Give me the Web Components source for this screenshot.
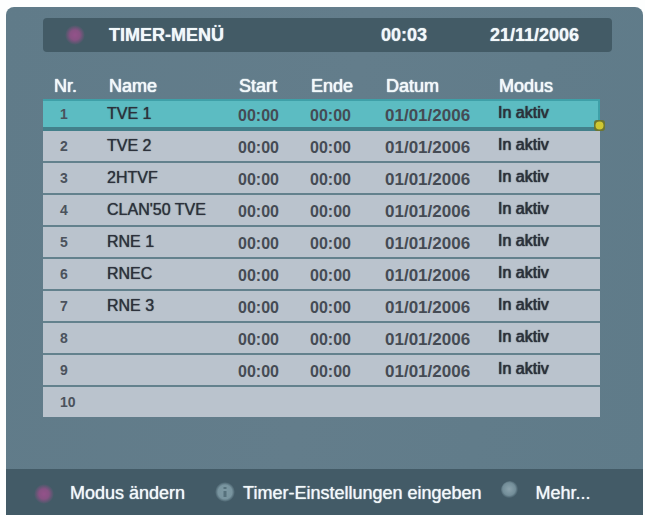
<!DOCTYPE html>
<html lang="de">
<head>
<meta charset="utf-8">
<meta name="viewport" content="width=device-width, initial-scale=1">
<title>Timer-Menü</title>
<style>
    html {
        background: #fdfefe;
    }
    body {
        margin: 0;
        padding: 7px 2px 0 6px;
        box-sizing: border-box;
        min-height: 100vh;
        display: flex;
        font-family: "Liberation Sans", Arial, sans-serif;
    }
</style>
</head>
<body>
<osd-screen>
    <osd-title-bar slot="title">
        TIMER-MENÜ
        <time slot="clock">00:03</time>
        <time slot="date" datetime="2006-11-21">21/11/2006</time>
    </osd-title-bar>
    <timer-table names="TVE 1,TVE 2,2HTVF,CLAN'50 TVE,RNE 1,RNEC,RNE 3,," rows="10" selected="1"></timer-table>
    <osd-key slot="keys" kind="red">Modus ändern</osd-key>
    <osd-key slot="keys" kind="info">Timer-Einstellungen eingeben</osd-key>
    <osd-key slot="keys" kind="more">Mehr...</osd-key>
</osd-screen>

<script>
class OsdScreen extends HTMLElement {
    connectedCallback() {
        const shadow = this.attachShadow({ mode: "open" });
        shadow.innerHTML = `
            <style>
                :host {
                    flex: 1;
                    min-width: 0;
                    display: flex;
                    flex-direction: column;
                    overflow: hidden;
                    background: linear-gradient(100deg, #607b89, #637d8b 50%, #5f7b89);
                    border-radius: 8px 8px 0 0;
                    color: #f2f8fa;
                }
                header {
                    padding: 11px 31px 0 37px;
                }
                main {
                    flex: 1;
                    padding: 22px 43px 50px 37px;
                }
                footer {
                    display: flex;
                    align-items: center;
                    box-sizing: border-box;
                    min-height: 46px;
                    padding: 2px 28px 0;
                    gap: 18px;
                    background: #435b67;
                }
            </style>
            <header><slot name="title"></slot></header>
            <main><slot></slot></main>
            <footer><slot name="keys"></slot></footer>
        `;
    }
}

class OsdTitleBar extends HTMLElement {
    connectedCallback() {
        const shadow = this.attachShadow({ mode: "open" });
        shadow.innerHTML = `
            <style>
                :host {
                    display: grid;
                    grid-template-columns: 66px 1fr 109px 122px;
                    align-items: center;
                    height: 34px;
                    border-radius: 4px;
                    background: #435b66;
                    font-size: 18px;
                    font-weight: bold;
                    line-height: 22px;
                    text-shadow: 0 0 1px #dfeaf0;
                }
                h1 {
                    margin: 0;
                    font: inherit;
                }
                svg {
                    display: block;
                    margin-left: 22px;
                }
            </style>
            <svg width="20" height="20" viewBox="0 0 20 20" aria-hidden="true">
                <defs>
                    <radialGradient id="dot">
                        <stop offset="0" stop-color="#94528a"/>
                        <stop offset=".5" stop-color="#875283"/>
                        <stop offset="1" stop-color="#875283" stop-opacity="0"/>
                    </radialGradient>
                </defs>
                <circle cx="10" cy="10" r="10" fill="url(#dot)"/>
            </svg>
            <h1><slot></slot></h1>
            <slot name="clock"></slot>
            <slot name="date"></slot>
        `;
    }
}

class TimerTable extends HTMLElement {
    connectedCallback() {
        const shadow = this.attachShadow({ mode: "open" });
        shadow.innerHTML = `
            <style>
                :host {
                    display: block;
                }
                table {
                    width: 100%;
                    table-layout: fixed;
                    border-collapse: separate;
                    border-spacing: 0;
                }
                th, td {
                    box-sizing: border-box;
                }
                .nr { width: 64px; }
                .name { width: 130px; }
                .start { width: 72px; }
                .ende { width: 75px; }
                .datum { width: 113px; }
                th {
                    padding: 0 0 1px 2px;
                    height: 25px;
                    font-size: 18px;
                    font-weight: normal;
                    line-height: 22px;
                    text-align: left;
                    text-shadow: 0 0 1px #f2f8fa, 0 0 1px #f2f8fa;
                }
                th:first-child {
                    padding-left: 11px;
                }
                td {
                    position: relative;
                    height: 32px;
                    padding: 0;
                    border-bottom: 2px solid #63818d;
                    background: #bac3cd;
                    color: #2c313b;
                    font-size: 16px;
                    line-height: 18px;
                    text-shadow: 0 0 1px #30353f;
                    white-space: nowrap;
                }
                td:first-child {
                    padding-left: 17px;
                    color: #4b525c;
                    font-size: 14px;
                    font-weight: bold;
                    text-shadow: none;
                }
                td.time {
                    padding: 3px 0 0 1px;
                    color: #454b54;
                    font-weight: bold;
                    text-shadow: none;
                }
                td.date {
                    font-size: 17px;
                }
                td.mode {
                    padding: 0 0 3px 1px;
                    text-shadow: 0 0 1px #30353f, 0 0 1px #30353f;
                }
                tr:last-child td {
                    height: 30px;
                    border-bottom: 0;
                }
                .selected td {
                    border-top: 2px solid #3fa0a8;
                    border-bottom: 4px solid #43808b;
                    background: #5cbcc2;
                }
                .selected td:last-child {
                    border-right: 2px solid #3fa0a8;
                }
                .marker {
                    position: absolute;
                    right: -8px;
                    bottom: -5px;
                }
            </style>
            <table>
                <thead>
                    <tr>
                        <th class="nr">Nr.</th>
                        <th class="name">Name</th>
                        <th class="start">Start</th>
                        <th class="ende">Ende</th>
                        <th class="datum">Datum</th>
                        <th>Modus</th>
                    </tr>
                </thead>
                <tbody></tbody>
            </table>
        `;
        this.render();
    }

    render() {
        const names = this.getAttribute("names").split(",");
        const count = Number(this.getAttribute("rows"));
        const selected = Number(this.getAttribute("selected"));
        const body = this.shadowRoot.querySelector("tbody");

        for (let i = 1; i <= count; i++) {
            const row = body.insertRow();
            // Slots past the end of the list are unused and stay empty
            const used = i <= names.length;
            this.addCell(row, i);
            this.addCell(row, used ? names[i - 1] : "");
            this.addCell(row, used ? "00:00" : "", "time");
            this.addCell(row, used ? "00:00" : "", "time");
            this.addCell(row, used ? "01/01/2006" : "", "time date");
            const last = this.addCell(row, used ? "In aktiv" : "", "mode");

            if (i === selected) {
                row.className = "selected";
                last.insertAdjacentHTML("beforeend", `
                    <svg class="marker" width="13" height="13" viewBox="0 0 13 13" aria-hidden="true">
                        <rect x="1" y="1" width="11" height="11" rx="3" fill="#6d762f"/>
                        <circle cx="6.5" cy="6.5" r="4" fill="#cfc731"/>
                    </svg>
                `);
            }
        }
    }

    addCell(row, text, className = "") {
        const cell = row.insertCell();
        cell.className = className;
        cell.textContent = text;
        return cell;
    }
}

const KEY_ICONS = {
    red: `
        <radialGradient id="g"><stop offset="0" stop-color="#94528a"/><stop offset=".5" stop-color="#875283"/><stop offset="1" stop-color="#875283" stop-opacity="0"/></radialGradient>
        <circle cx="10" cy="11" r="10" fill="url(#g)"/>`,
    info: `
        <radialGradient id="g"><stop offset="0" stop-color="#7d99a3"/><stop offset=".7" stop-color="#78949f"/><stop offset="1" stop-color="#78949f" stop-opacity="0"/></radialGradient>
        <circle cx="10" cy="9" r="10" fill="url(#g)"/>
        <path d="M10 4v2M10 8v6" stroke="#56717c" stroke-width="3"/>`,
    more: `
        <radialGradient id="g" cx=".45" cy=".45"><stop offset="0" stop-color="#8ba3ad"/><stop offset=".7" stop-color="#738e99"/><stop offset="1" stop-color="#738e99" stop-opacity="0"/></radialGradient>
        <circle cx="10" cy="7" r="9" fill="url(#g)"/>`
};

class OsdKey extends HTMLElement {
    connectedCallback() {
        const kind = this.getAttribute("kind");
        const shadow = this.attachShadow({ mode: "open" });
        shadow.innerHTML = `
            <style>
                :host {
                    display: block;
                }
                :host([kind="red"]) {
                    margin-right: 12px;
                }
                button {
                    display: flex;
                    align-items: center;
                    gap: 16px;
                    padding: 0;
                    border: 0;
                    background: none;
                    color: inherit;
                    font: 18px/22px "Liberation Sans", Arial, sans-serif;
                    text-shadow: 0 0 1px #f2f8fa;
                    white-space: nowrap;
                }
                :host([kind="info"]) button {
                    gap: 8px;
                }
                svg {
                    flex: none;
                }
            </style>
            <button type="button">
                <svg width="20" height="20" viewBox="0 0 20 20" overflow="visible" aria-hidden="true">${KEY_ICONS[kind]}</svg>
                <slot></slot>
            </button>
        `;
    }
}

customElements.define("osd-screen", OsdScreen);
customElements.define("osd-title-bar", OsdTitleBar);
customElements.define("timer-table", TimerTable);
customElements.define("osd-key", OsdKey);
</script>
</body>
</html>
